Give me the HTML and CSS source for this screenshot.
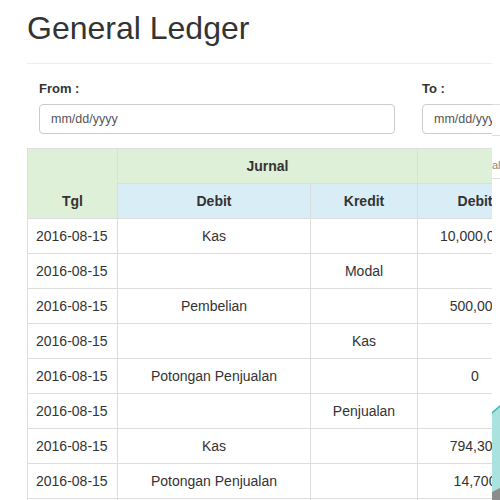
FILE: index.html
```html
<!DOCTYPE html>
<html>
<head>
<meta charset="utf-8">
<link rel="stylesheet" href="styles.css">
</head>
<body>
<div class="page">
  <h1 class="title">General Ledger</h1>
  <hr class="rule">
  <div class="filters">
    <div class="field">
      <label class="label">From :</label>
      <div class="input">mm/dd/yyyy</div>
    </div>
    <div class="field">
      <label class="label">To :</label>
      <div class="input">mm/dd/yyyy</div>
    </div>
  </div>
  <table class="ledger">
    <colgroup>
      <col class="c-tgl"><col class="c-debit"><col class="c-kredit"><col class="c-amt"><col class="c-amt">
    </colgroup>
    <thead>
      <tr class="head-green">
        <th rowspan="2" class="bottom">Tgl</th>
        <th colspan="2">Jurnal</th>
        <th colspan="2" class="saldo">Saldo</th>
      </tr>
      <tr class="head-blue">
        <th>Debit</th>
        <th>Kredit</th>
        <th>Debit</th>
        <th>Kredit</th>
      </tr>
    </thead>
    <tbody>
      <tr><td class="date">2016-08-15</td><td>Kas</td><td></td><td>10,000,000</td><td></td></tr>
      <tr><td class="date">2016-08-15</td><td></td><td>Modal</td><td></td><td>10,000,000</td></tr>
      <tr><td class="date">2016-08-15</td><td>Pembelian</td><td></td><td>500,000</td><td></td></tr>
      <tr><td class="date">2016-08-15</td><td></td><td>Kas</td><td></td><td>500,000</td></tr>
      <tr><td class="date">2016-08-15</td><td>Potongan Penjualan</td><td></td><td>0</td><td></td></tr>
      <tr><td class="date">2016-08-15</td><td></td><td>Penjualan</td><td></td><td>0</td></tr>
      <tr><td class="date">2016-08-15</td><td>Kas</td><td></td><td>794,300</td><td></td></tr>
      <tr><td class="date">2016-08-15</td><td>Potongan Penjualan</td><td></td><td>14,700</td><td></td></tr>
      <tr><td class="date">2016-08-15</td><td></td><td>Penjualan</td><td></td><td>809,000</td></tr>
    </tbody>
  </table>
</div>
<div class="strip">
  <div class="strip-line l1"></div>
  <div class="strip-line l2"></div>
  <div class="strip-text">al</div>
  <div class="strip-line l3"></div>
  <svg class="strip-art" width="8" height="100" viewBox="0 0 8 100">
    <polygon points="0,12 8,5 8,100 0,100" fill="#a9e2de"/>
    <polygon points="0,12 8,5 8,7 0,14" fill="#3fbdb3"/>
    <polygon points="0,92 8,88 8,100 0,100" fill="#8c8c8c"/>
  </svg>
</div>
</body>
</html>
```

FILE: styles.css
```css
html, body {
  margin: 0;
  padding: 0;
  background: #fff;
}
body {
  font-family: "Liberation Sans", Arial, sans-serif;
  color: #333;
  font-size: 14px;
  width: 500px;
  height: 500px;
  overflow: hidden;
  position: relative;
}
.page {
  width: 465px;
  padding-left: 27px;
  overflow: hidden;
}
.title {
  font-size: 32px;
  font-weight: normal;
  line-height: 35px;
  margin: 11px 0 0 0;
  color: #333;
  white-space: nowrap;
}
.rule {
  border: 0;
  border-top: 1px solid #eee;
  margin: 17px 0 0 0;
  height: 0;
}
.filters {
  display: flex;
  width: 766px;
  margin-top: 16px;
}
.field {
  width: 383px;
  padding: 0 12px;
  box-sizing: border-box;
}
.label {
  display: block;
  font-weight: bold;
  font-size: 13px;
  line-height: 18px;
  color: #333;
}
.input {
  margin-top: 6px;
  height: 30px;
  box-sizing: border-box;
  border: 1px solid #ccc;
  border-radius: 4px;
  padding: 0 11px;
  font-size: 12.5px;
  line-height: 28px;
  color: #555;
  width: 356px;
  white-space: nowrap;
  overflow: hidden;
}
.ledger {
  margin-top: 14px;
  border-collapse: collapse;
  table-layout: fixed;
  width: 620px;
}
.c-tgl { width: 90px; }
.c-debit { width: 193px; }
.c-kredit { width: 107px; }
.c-amt { width: 115px; }
.ledger th, .ledger td {
  border: 1px solid #ddd;
  height: 35px;
  padding: 0 8px;
  box-sizing: border-box;
  text-align: center;
  font-size: 14px;
  line-height: 20px;
  white-space: nowrap;
  overflow: hidden;
}
.ledger th {
  font-weight: bold;
  color: #333;
}
.head-green th {
  background: #dff0d8;
}
.head-blue th {
  background: #d9edf7;
}
.ledger th.bottom {
  vertical-align: bottom;
  padding-bottom: 7px;
}
.ledger td.date {
  text-align: left;
}
.ledger th.saldo {
  color: #888;
  font-weight: normal;
  font-size: 11px;
}
.strip {
  position: absolute;
  left: 492px;
  top: 0;
  width: 8px;
  height: 500px;
  background: #fff;
  overflow: hidden;
}
.strip-line {
  position: absolute;
  left: 0;
  width: 8px;
  height: 1px;
  background: #ddd;
}
.l1 { top: 104px; }
.l2 { top: 135px; }
.l3 { top: 178px; }
.strip-text {
  position: absolute;
  left: 0;
  top: 158px;
  font-size: 11px;
  line-height: 14px;
  color: #888;
}
.strip-art {
  position: absolute;
  left: 0;
  top: 400px;
  display: block;
}
```
